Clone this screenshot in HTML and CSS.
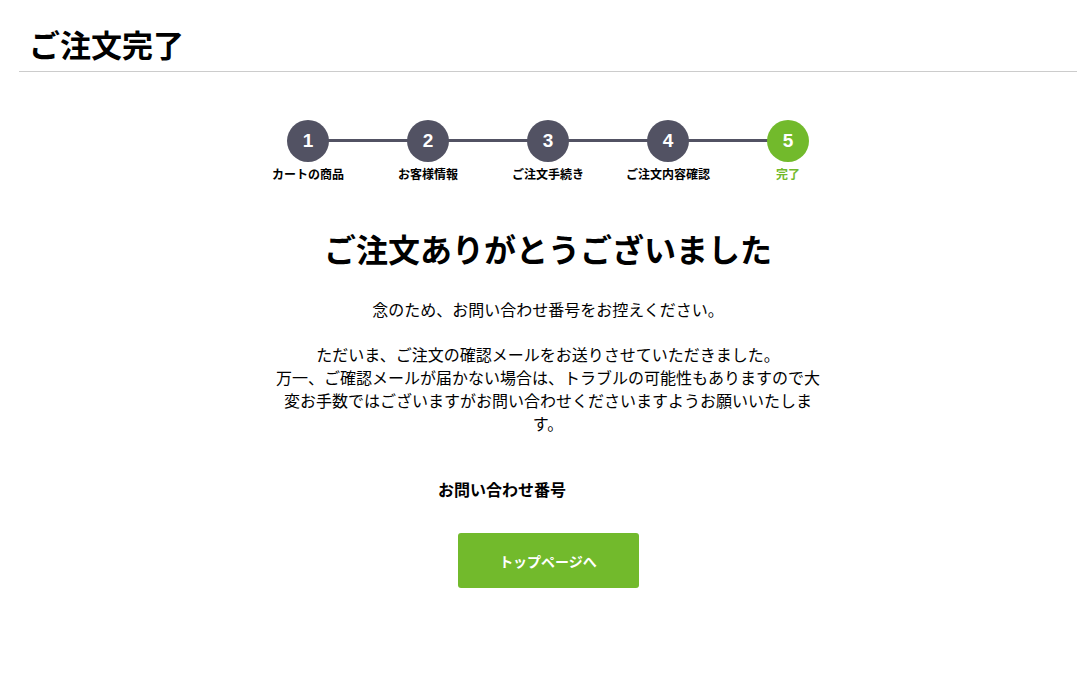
FILE: index.html
```html
<!DOCTYPE html>
<html lang="ja">
<head>
<meta charset="utf-8">
<title>ご注文完了</title>
<link rel="stylesheet" href="styles.css">
</head>
<body>
<div class="page">
  <header class="page-header">
    <h1 class="page-title">ご注文完了</h1>
  </header>
  <main class="content">
    <ol class="steps">
      <li class="step done"><span class="step-num">1</span><span class="step-label">カートの商品</span></li>
      <li class="step done"><span class="step-num">2</span><span class="step-label">お客様情報</span></li>
      <li class="step done"><span class="step-num">3</span><span class="step-label">ご注文手続き</span></li>
      <li class="step done"><span class="step-num">4</span><span class="step-label">ご注文内容確認</span></li>
      <li class="step active"><span class="step-num">5</span><span class="step-label">完了</span></li>
    </ol>
    <h2 class="thanks">ご注文ありがとうございました</h2>
    <div class="message">
      <p>念のため、お問い合わせ番号をお控えください。</p>
      <p>ただいま、ご注文の確認メールをお送りさせていただきました。<br>万一、ご確認メールが届かない場合は、トラブルの可能性もありますので大変お手数ではございますがお問い合わせくださいますようお願いいたします。</p>
    </div>
    <dl class="order-no">
      <dt>お問い合わせ番号</dt>
      <dd></dd>
    </dl>
    <div class="actions">
      <a class="btn-top" href="#">トップページへ</a>
    </div>
  </main>
</div>
</body>
</html>
```

FILE: styles.css
```css
* { box-sizing: border-box; }
html, body { margin: 0; padding: 0; background: #fff; }
body {
  font-family: "Noto Sans CJK JP", "Noto Sans", sans-serif;
  color: #000;
}
.page {
  padding: 0 13px 0 19px;
}
.page-header {
  border-bottom: 1px solid #cccccc;
  padding: 22px 0 0 10px;
  height: 72px;
}
.page-title {
  margin: 0;
  font-size: 31px;
  font-weight: 700;
  line-height: 44px;
}
.content {
  display: flex;
  flex-direction: column;
  align-items: center;
}
.steps {
  list-style: none;
  margin: 48px 0 0;
  padding: 0;
  display: flex;
}
.step {
  position: relative;
  width: 120px;
  display: flex;
  flex-direction: column;
  align-items: center;
}
.step + .step::before {
  content: "";
  position: absolute;
  top: 19px;
  right: 60px;
  width: 120px;
  height: 3px;
  background: #525263;
  z-index: 0;
}
.step-num {
  position: relative;
  z-index: 1;
  width: 42px;
  height: 42px;
  border-radius: 50%;
  background: #525263;
  color: #fff;
  font-family: "Liberation Sans", Arial, sans-serif;
  font-weight: 700;
  font-size: 19px;
  display: flex;
  align-items: center;
  justify-content: center;
}
.step.active .step-num { background: #72ba2c; }
.step-label {
  margin-top: 4px;
  font-size: 12px;
  font-weight: 700;
  line-height: 16px;
  white-space: nowrap;
}
.step.active .step-label { color: #72ba2c; }
.thanks {
  margin: 43px 0 0;
  font-size: 32px;
  font-weight: 700;
  line-height: 46px;
}
.message {
  width: 550px;
  margin-top: 27px;
  text-align: center;
  font-size: 16px;
  line-height: 22.7px;
}
.message p { margin: 0 0 22.7px; }
.message p:last-child { margin-bottom: 0; }
.order-no {
  display: flex;
  width: 220px;
  margin: 43px 0 0;
  font-size: 16px;
  font-weight: 700;
  line-height: 24px;
}
.order-no dt { margin: 0; }
.order-no dd { margin: 0; }
.actions {
  margin-top: 32px;
}
.btn-top {
  display: flex;
  align-items: center;
  justify-content: center;
  width: 181px;
  height: 55px;
  background: #72ba2c;
  color: #fff;
  border-radius: 3px;
  font-size: 14px;
  font-weight: 700;
  text-decoration: none;
}
```
